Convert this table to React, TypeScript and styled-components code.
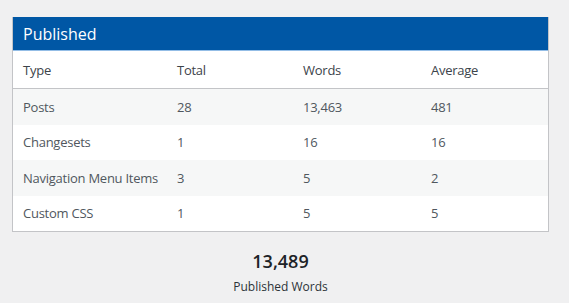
import React from 'react'
import styled, { createGlobalStyle } from 'styled-components'

const GlobalStyle = createGlobalStyle`
  html, body {
    margin: 0;
    background: #f0f0f1;
    font-family: 'Open Sans', 'Noto Sans', sans-serif;
  }
`

const Page = styled.div`
  padding: 17px 20px 0 12px;
  width: 537px;
`

const Card = styled.section`
  border: 1px solid #c3c4c7;
  border-top: none;
  background: #fff;
`

const Title = styled.h2`
  margin: 0;
  height: 33px;
  padding: 0 10px;
  display: flex;
  align-items: center;
  background: #0057a5;
  color: #fff;
  font-size: 16px;
  font-weight: 400;
  border-bottom: 1px solid #93bde6;
`

const Table = styled.table`
  width: 100%;
  table-layout: fixed;
  border-collapse: collapse;
  font-size: 13px;
  letter-spacing: -0.25px;
  color: #50575e;
`

const Th = styled.th`
  text-align: left;
  font-weight: 400;
  color: #3c434a;
  height: 37px;
  padding: 0 10px;
  border-bottom: 1px solid #c3c4c7;
`

const Row = styled.tr<{ $alt: boolean }>`
  background: ${(p) => (p.$alt ? '#f6f7f7' : '#fff')};
`

const Td = styled.td`
  height: 35.5px;
  padding: 0 10px;
  white-space: nowrap;
`

const Summary = styled.div`
  display: flex;
  flex-direction: column;
  align-items: center;
  padding-top: 17px;
`

const Big = styled.div`
  font-size: 18px;
  font-weight: 600;
  color: #1d2327;
  line-height: 24px;
`

const Label = styled.div`
  font-size: 12px;
  color: #2c3338;
  margin-top: 5px;
`

const rows = [
  ['Posts', '28', '13,463', '481'],
  ['Changesets', '1', '16', '16'],
  ['Navigation Menu Items', '3', '5', '2'],
  ['Custom CSS', '1', '5', '5'],
]

export default function App() {
  return (
    <Page>
      <GlobalStyle />
      <Card>
        <Title>Published</Title>
        <Table>
          <colgroup>
            <col style={{ width: 154 }} />
            <col style={{ width: 126 }} />
            <col style={{ width: 128 }} />
            <col />
          </colgroup>
          <thead>
            <tr>
              <Th>Type</Th>
              <Th>Total</Th>
              <Th>Words</Th>
              <Th>Average</Th>
            </tr>
          </thead>
          <tbody>
            {rows.map((r, i) => (
              <Row key={r[0]} $alt={i % 2 === 0}>
                {r.map((c, j) => (
                  <Td key={j}>{c}</Td>
                ))}
              </Row>
            ))}
          </tbody>
        </Table>
      </Card>
      <Summary>
        <Big>13,489</Big>
        <Label>Published Words</Label>
      </Summary>
    </Page>
  )
}
